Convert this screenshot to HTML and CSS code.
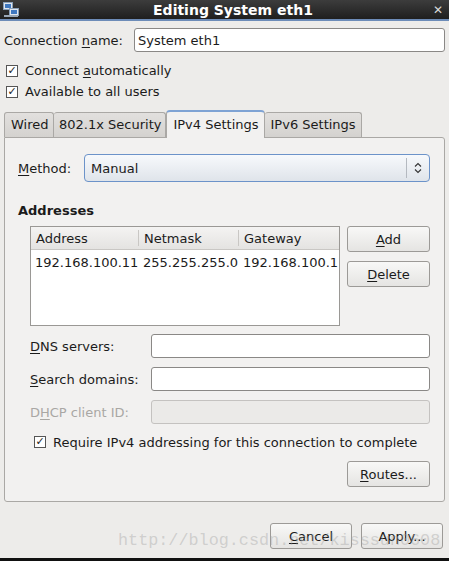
FILE: index.html
```html
<!DOCTYPE html>
<html lang="en">
<head>
    <meta charset="UTF-8">
    <title>Editing System eth1</title>
    <link rel="stylesheet" href="styles.css">
</head>
<body>

<div class="titlebar">
    <svg class="app-icon" width="16" height="16" viewBox="0 0 16 16">
        <rect x="0.5" y="0.5" width="9" height="7" fill="#dfe6ef" stroke="#8aa0b8"/>
        <rect x="2" y="2" width="6" height="4" fill="#3f78c0"/>
        <rect x="6.5" y="6.5" width="9" height="7" fill="#dfe6ef" stroke="#8aa0b8"/>
        <rect x="8" y="8" width="6" height="4" fill="#3f78c0"/>
        <rect x="1" y="13" width="14" height="2" fill="#9aa7b5"/>
    </svg>
    <div class="title">Editing System eth1</div>
    <div class="close">&#x2715;</div>
</div>

<div class="dialog">
    <div class="row conn-row">
        <label>Connection <u>n</u>ame:</label>
        <input type="text" class="field conn-field" value="System eth1">
    </div>

    <div class="check-row"><span class="check">&#x2713;</span><span>Connect <u>a</u>utomatically</span></div>
    <div class="check-row"><span class="check">&#x2713;</span><span>Available to all users</span></div>

    <div class="tabs">
        <div class="tab">Wired</div>
        <div class="tab tab-security">802.1x Security</div>
        <div class="tab active">IPv4 Settings</div>
        <div class="tab">IPv6 Settings</div>
    </div>

    <div class="panel">
        <div class="row method-row">
            <label><u>M</u>ethod:</label>
            <div class="combo">
                <span>Manual</span>
                <span class="combo-arrow">
                    <svg width="8" height="12" viewBox="0 0 8 12">
                        <path d="M1 4.5 L4 1.5 L7 4.5 M1 7.5 L4 10.5 L7 7.5" fill="none" stroke="#333" stroke-width="1.1"/>
                    </svg>
                </span>
            </div>
        </div>

        <h3 class="section">Addresses</h3>

        <div class="addresses">
            <div class="table">
                <div class="thead">
                    <div class="th c1">Address</div>
                    <div class="th c2">Netmask</div>
                    <div class="th c3">Gateway</div>
                </div>
                <div class="tr">
                    <div class="c1">192.168.100.11</div>
                    <div class="c2">255.255.255.0</div>
                    <div class="c3">192.168.100.1</div>
                </div>
            </div>
            <div class="side-buttons">
                <button class="btn"><u>A</u>dd</button>
                <button class="btn"><u>D</u>elete</button>
            </div>
        </div>

        <div class="form">
            <label><u>D</u>NS servers:</label>
            <input type="text" class="field">
            <label><u>S</u>earch domains:</label>
            <input type="text" class="field">
            <label class="disabled">D<u>H</u>CP client ID:</label>
            <input type="text" class="field" disabled>
        </div>

        <div class="check-row require"><span class="check">&#x2713;</span><span>Require IPv4 addressing for this connection to complete</span></div>

        <div class="routes-row">
            <button class="btn"><u>R</u>outes...</button>
        </div>
    </div>

    <div class="dialog-buttons">
        <button class="btn"><u>C</u>ancel</button>
        <button class="btn">Apply...</button>
    </div>
</div>

<div class="watermark">http://blog.csdn.net/kisssun0608</div>
<div class="bottom-edge"></div>

</body>
</html>
```

FILE: styles.css
```css
body {
    margin: 0;
    width: 449px;
    height: 561px;
    overflow: hidden;
    position: relative;
    font-family: "DejaVu Sans", sans-serif;
    font-size: 13px;
    color: #1b1b1b;
    background-color: #edecea;
}
u {
    text-decoration-thickness: 1px;
    text-underline-offset: 2px;
}
.titlebar {
    height: 19px;
    display: flex;
    align-items: center;
    padding: 0 6px 0 3px;
    background: linear-gradient(#3c3c3c, #1f1f1f);
    border-bottom: 2px solid #6d8cb8;
    color: #fff;
}
.app-icon {
    flex: none;
}
.title {
    flex: 1;
    text-align: center;
    font-weight: bold;
    font-size: 14px;
    padding-left: 14px;
}
.close {
    font-size: 12px;
    color: #d8d8d8;
}
.dialog {
    padding: 7px 4px 0 4px;
}
.row {
    display: flex;
    align-items: center;
}
.conn-row {
    justify-content: space-between;
    height: 24px;
}
.field {
    box-sizing: border-box;
    height: 24px;
    border: 1px solid #8a8886;
    border-radius: 3px;
    background: #fff;
    font-family: inherit;
    font-size: 13px;
    color: #1b1b1b;
    padding: 0 3px;
    margin: 0;
}
.field:disabled {
    background: #ebeae8;
    border-color: #c4c2c0;
}
.conn-field {
    width: 311px;
}
.check-row {
    display: flex;
    align-items: center;
    height: 21px;
    padding-left: 2px;
}
.conn-row + .check-row {
    margin-top: 8px;
}
.check {
    box-sizing: border-box;
    width: 12px;
    height: 12px;
    border: 1px solid #555;
    background: #fff;
    font-size: 11px;
    line-height: 10px;
    text-align: center;
    margin-right: 7px;
    font-weight: bold;
    color: #222;
}
.tabs {
    display: flex;
    align-items: flex-end;
    margin-top: 7px;
    height: 28px;
}
.tab {
    box-sizing: border-box;
    height: 25px;
    padding: 4px 5px 0 6px;
    border: 1px solid #aaa8a5;
    border-bottom: none;
    border-left: none;
    background: linear-gradient(#e2e0de, #d4d2cf);
    border-radius: 3px 3px 0 0;
}
.tab:first-child {
    border-left: 1px solid #aaa8a5;
    padding-left: 6px;
    width: 50px;
}
.tab-security {
    padding: 4px 4px 0 5px;
}
.tab.active {
    height: 28px;
    padding-top: 5px;
    background: #f2f1f0;
    border: 1px solid #aaa8a5;
    border-top: 2px solid #7fa3d4;
    border-bottom: none;
    border-radius: 4px 4px 0 0;
    position: relative;
    top: 1px;
}
.panel {
    box-sizing: border-box;
    width: 441px;
    height: 365px;
    background: #f2f1f0;
    border: 1px solid #aaa8a5;
    border-radius: 0 3px 3px 3px;
    padding: 16px 14px 0 13px;
}
.method-row {
    height: 28px;
}
.method-row label {
    width: 66px;
}
.combo {
    box-sizing: border-box;
    width: 346px;
    height: 28px;
    display: flex;
    align-items: center;
    justify-content: space-between;
    padding-left: 6px;
    border: 1px solid #6c93c9;
    border-radius: 4px;
    background: linear-gradient(#f7f9fc, #dfe4ea);
}
.combo-arrow {
    display: flex;
    align-items: center;
    justify-content: center;
    width: 22px;
    height: 20px;
    border-left: 1px solid #b4b9c0;
}
.section {
    margin: 21px 0 0 0;
    font-size: 13px;
    font-weight: bold;
    height: 16px;
    line-height: 16px;
}
.addresses {
    display: flex;
    gap: 7px;
    margin: 7px 0 0 12px;
}
.table {
    box-sizing: border-box;
    width: 310px;
    height: 100px;
    border: 1px solid #9a9895;
    background: #fff;
}
.thead {
    display: flex;
    height: 22px;
    border-bottom: 1px solid #c9c7c4;
    background: linear-gradient(#f4f3f2, #e4e3e1);
}
.th {
    display: flex;
    align-items: center;
    box-sizing: border-box;
    padding-left: 5px;
}
.th + .th {
    border-left: 1px solid #c9c7c4;
    height: 16px;
    margin-top: 3px;
}
.tr {
    display: flex;
    height: 24px;
    align-items: center;
}
.tr div {
    box-sizing: border-box;
    padding-left: 4px;
}
.c1 {
    width: 107px;
}
.c2 {
    width: 100px;
}
.c3 {
    width: 101px;
}
.tr .c2,
.tr .c3 {
    padding-left: 5px;
}
.side-buttons {
    display: flex;
    flex-direction: column;
    gap: 9px;
}
.btn {
    box-sizing: border-box;
    width: 83px;
    height: 26px;
    border: 1px solid #9c9a97;
    border-radius: 3px;
    background: linear-gradient(#f8f8f7, #e5e4e2);
    font-family: inherit;
    font-size: 13px;
    color: #1b1b1b;
    padding: 0;
}
.form {
    display: grid;
    grid-template-columns: 121px 279px;
    row-gap: 9px;
    align-items: center;
    margin: 8px 0 0 12px;
}
.form label.disabled {
    color: #a9a7a4;
}
.require {
    margin: 9px 0 0 14px;
    height: 18px;
}
.routes-row {
    display: flex;
    justify-content: flex-end;
    margin-top: 10px;
}
.dialog-buttons {
    display: flex;
    justify-content: flex-end;
    gap: 9px;
    margin-top: 21px;
    padding-right: 2px;
}
.dialog-buttons .btn {
    width: 82px;
}
.watermark {
    position: absolute;
    left: 118px;
    top: 531px;
    font-family: "Liberation Mono", monospace;
    font-size: 16.8px;
    color: rgba(160, 160, 160, 0.4);
    pointer-events: none;
}
.bottom-edge {
    position: absolute;
    left: 0;
    right: 0;
    bottom: 0;
    height: 3px;
    background: #111;
}
```
